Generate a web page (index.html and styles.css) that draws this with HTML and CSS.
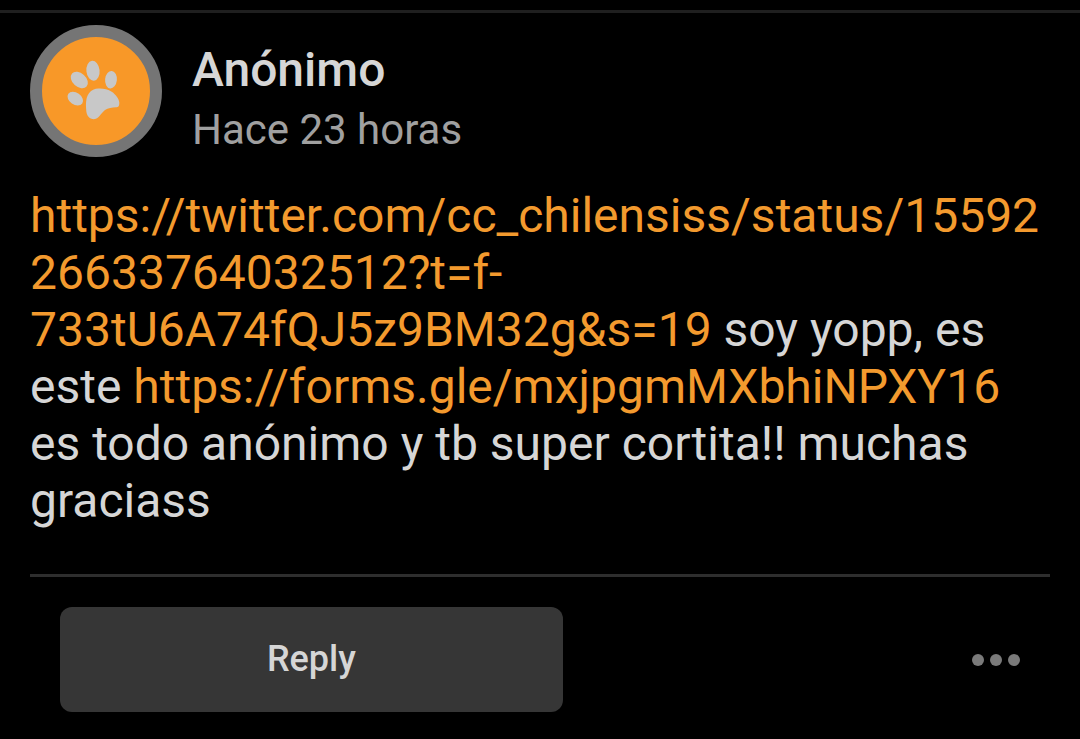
FILE: index.html
```
<!DOCTYPE html>
<html lang="es">
<head>
    <meta charset="UTF-8">
    <meta name="viewport" content="width=device-width, initial-scale=1.0">
    <title>Anónimo</title>
    <link rel="stylesheet" href="styles.css">
</head>
<body>
    <article class="post">
        <header class="post-header">
            <div class="avatar">
                <svg viewBox="0 0 108 108" aria-hidden="true">
                    <g fill="#c8c8c8">
                        <ellipse cx="51" cy="33.7" rx="6.6" ry="10" transform="rotate(-6 51 33.7)"/>
                        <ellipse cx="69" cy="42.7" rx="5.9" ry="8.8" transform="rotate(6 69 42.7)"/>
                        <ellipse cx="37.3" cy="43" rx="6.8" ry="9.8" transform="rotate(-48 37.3 43)"/>
                        <ellipse cx="33.3" cy="61.7" rx="6" ry="8.5" transform="rotate(-55 33.3 61.7)"/>
                        <path d="M56.3 51.6C61 51.3 66 52.5 69.7 54.7C74 57.5 77 62 77.3 65.5C77.4 69 76.5 70.2 74 70.3C70 70.6 66 71 63 73C60 75.2 58 79 56 80.5C54 82.2 51.5 82.6 49.5 81.7C46 80.5 44.4 77 44.2 73C44 69.5 43.7 66 44.4 62.5C45.5 56.5 49.5 52 56.3 51.6Z"/>
                    </g>
                </svg>
            </div>
            <div class="author">
                <h1 class="author-name">Anónimo</h1>
                <time class="post-time">Hace 23 horas</time>
            </div>
        </header>

        <p class="post-text"><a href="https://twitter.com/cc_chilensiss/status/1559226633764032512?t=f-733tU6A74fQJ5z9BM32g&amp;s=19">https://twitter.com/cc_chilensiss/status/15592<wbr>26633764032512?t=f-<wbr>733tU6A74fQJ5z9BM32g&amp;s=19</a> soy yopp, es este <a href="https://forms.gle/mxjpgmMXbhiNPXY16">https://forms.gle/mxjpgmMXbhiNPXY16</a> es todo anónimo y tb super cortita!! muchas graciass</p>

        <footer class="post-actions">
            <button type="button" class="btn-reply">Reply</button>
            <button type="button" class="btn-more" aria-label="Más opciones">
                <svg viewBox="0 0 48 12" aria-hidden="true">
                    <circle cx="6" cy="6" r="6"/>
                    <circle cx="24" cy="6" r="6"/>
                    <circle cx="42" cy="6" r="6"/>
                </svg>
            </button>
        </footer>
    </article>
</body>
</html>
```

FILE: styles.css
```
* {
    box-sizing: border-box;
}

body {
    margin: 0;
    padding-top: 10px;
    background-color: #000;
    color: #d6d6d6;
    font-family: Roboto, sans-serif;
}

.post {
    padding: 12px 30px 24px;
    border-top: 3px solid #1f1f1f;
}

.post-header {
    display: flex;
    align-items: flex-start;
    gap: 30px;
}

.avatar {
    width: 132px;
    height: 132px;
    border: 12px solid #757575;
    border-radius: 50%;
    background-color: #f89828;
}

.avatar svg {
    display: block;
    width: 100%;
}

.author {
    padding-top: 9px;
}

.author-name {
    margin: 0;
    font-size: 48px;
    font-weight: 500;
    line-height: 72px;
}

.post-time {
    display: block;
    color: #a0a0a0;
    font-size: 42px;
    line-height: 48px;
}

.post-text {
    margin: 30px 0 45px;
    font-size: 48px;
    line-height: 57px;
}

.post-text a {
    color: #f39a2e;
    text-decoration: none;
}

.post-actions {
    display: grid;
    grid-template-columns: 11fr 10fr;
    align-items: center;
    padding: 30px 30px 0;
    border-top: 3px solid #2e2e2e;
}

.btn-reply {
    height: 105px;
    padding: 0 0 2px;
    border: none;
    border-radius: 12px;
    background-color: #363636;
    color: #d6d6d6;
    font-family: inherit;
    font-size: 36px;
    font-weight: 500;
    cursor: pointer;
}

.btn-more {
    justify-self: end;
    padding: 0;
    border: none;
    background: none;
    cursor: pointer;
}

.btn-more svg {
    display: block;
    width: 48px;
    fill: #7a7a7a;
}
```
